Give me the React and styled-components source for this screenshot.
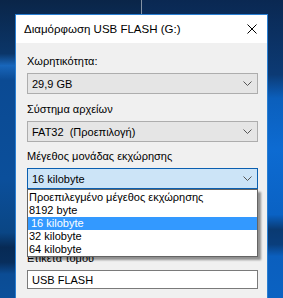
import styled, { createGlobalStyle } from "styled-components";

const GlobalStyle = createGlobalStyle`
html, body {
    margin: 0;
    padding: 0;
    overflow: hidden;
}
* {
    box-sizing: border-box;
}
`

const Desktop = styled.div`
width: 283px;
height: 298px;
overflow: hidden;
padding: 14px 0 0 15px;
font-family: "Liberation Sans", Arial, sans-serif;
font-size: 11px;
color: #000;
background:
    linear-gradient(180deg, #0a2548 0%, #0b3669 18%, #1866bb 22%, #0b4a93 27%, #0b4f9b 60%, #0a4685 78%, #072a55 83%, #082e5c 88%, #0b4c94 92%, #0b4f9a 100%) left top / 50% 100% no-repeat,
    linear-gradient(180deg, #0a2852 0%, #0c3a74 25%, #0b5fbc 33%, #0d6bd2 50%, #0a62c4 72%, #0a3a72 77%, #0a3e7c 82%, #0b5fbe 86%, #0b62c2 100%) right top / 50% 100% no-repeat;
`

const Window = styled.div`
width: 253px;
height: 300px;
border: 1px solid #2a7fd2;
border-bottom: none;
display: flex;
flex-direction: column;
background: #f0f0f0;
`

const TitleBar = styled.div`
height: 28px;
flex-shrink: 0;
background: #fff;
display: flex;
align-items: center;
justify-content: space-between;
padding: 0 10px 0 8px;
`

const Title = styled.span`
font-size: 11.5px;
white-space: nowrap;
`

const Body = styled.div`
padding: 10px 9px 0 11px;
display: flex;
flex-direction: column;
`

const Field = styled.div`
display: flex;
flex-direction: column;
margin-top: ${props => props.$gap || 0}px;
position: relative;
`

const Label = styled.div`
line-height: 16px;
height: 16px;
margin-bottom: 4px;
white-space: nowrap;
`

const Combo = styled.div`
height: 21px;
border: 1px solid ${props => props.$open ? "#0a5fb0" : "#adadad"};
background: ${props => props.$open ? "#cce4f7" : "#e5e5e5"};
display: flex;
align-items: center;
justify-content: space-between;
padding: 0 5px 0 4px;
white-space: nowrap;
`

const ComboWrap = styled.div`
position: relative;
`

const HiddenButton = styled.div`
margin-top: 8px;
height: 23px;
width: 180px;
border: 1px solid #adadad;
background: #e1e1e1;
`

const TextBox = styled.div`
height: 19px;
border: 1px solid #7a7a7a;
background: #fff;
display: flex;
align-items: center;
padding-left: 4px;
`

const List = styled.div`
position: absolute;
top: 100%;
left: 0;
right: 0;
z-index: 2;
background: #fff;
border: 1px solid #646464;
padding: 1px 0 0;
box-shadow: 3px 3px 2px rgba(0, 0, 0, 0.4);
`

const Item = styled.div`
height: 13px;
line-height: 13px;
padding-left: ${props => props.$selected ? 3 : 1}px;
background: ${props => props.$selected ? "#3399ff" : "transparent"};
color: ${props => props.$selected ? "#fff" : "#000"};
white-space: nowrap;
`

const Chevron = () => (
    <svg width="9" height="5" viewBox="0 0 9 5">
        <polyline points="0.5,0.5 4.5,4.5 8.5,0.5" fill="none" stroke="#555" strokeWidth="1" />
    </svg>
)

const CloseIcon = () => (
    <svg width="10" height="10" viewBox="0 0 10 10">
        <path d="M0.5 0.5 L9.5 9.5 M9.5 0.5 L0.5 9.5" stroke="#000" strokeWidth="1" />
    </svg>
)

const sizes = [
    "Προεπιλεγμένο μέγεθος εκχώρησης",
    "8192 byte",
    "16 kilobyte",
    "32 kilobyte",
    "64 kilobyte",
]

const App = () => {
    const selected = "16 kilobyte"
    return <>
    <GlobalStyle />
    <Desktop>
        <Window>
            <TitleBar>
                <Title>Διαμόρφωση USB FLASH (G:)</Title>
                <CloseIcon />
            </TitleBar>
            <Body>
                <Field>
                    <Label>Χωρητικότητα:</Label>
                    <Combo>29,9 GB<Chevron /></Combo>
                </Field>
                <Field $gap={7}>
                    <Label>Σύστημα αρχείων</Label>
                    <Combo>FAT32&nbsp; (Προεπιλογή)<Chevron /></Combo>
                </Field>
                <Field $gap={6}>
                    <Label>Μέγεθος μονάδας εκχώρησης</Label>
                    <ComboWrap>
                        <Combo $open>{selected}<Chevron /></Combo>
                        <List>
                            {sizes.map(s => (
                                <Item key={s} $selected={s === selected}>{s}</Item>
                            ))}
                        </List>
                    </ComboWrap>
                    <HiddenButton />
                </Field>
                <Field $gap={30}>
                    <Label>Ετικέτα τόμου</Label>
                    <TextBox>USB FLASH</TextBox>
                </Field>
            </Body>
        </Window>
    </Desktop>
    </>
}

export default App;
